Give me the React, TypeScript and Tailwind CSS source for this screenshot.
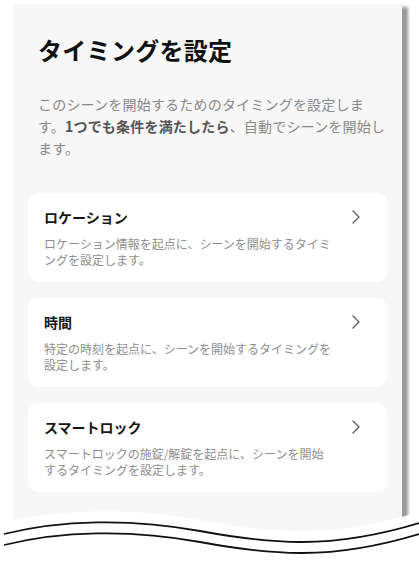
const font = { fontFamily: '"Noto Sans CJK JP", "Noto Sans", sans-serif' };

type Item = { title: string; lines: string[] };

const items: Item[] = [
  {
    title: 'ロケーション',
    lines: ['ロケーション情報を起点に、シーンを開始するタイミ', 'ングを設定します。'],
  },
  {
    title: '時間',
    lines: ['特定の時刻を起点に、シーンを開始するタイミングを', '設定します。'],
  },
  {
    title: 'スマートロック',
    lines: ['スマートロックの施錠/解錠を起点に、シーンを開始', 'するタイミングを設定します。'],
  },
];

function Chevron() {
  return (
    <svg width="10" height="14" viewBox="0 0 10 14" className="mt-[3px] shrink-0">
      <polyline
        points="2,1 8,7 2,13"
        fill="none"
        stroke="#5a5a5a"
        strokeWidth="1.3"
        strokeLinecap="round"
        strokeLinejoin="round"
      />
    </svg>
  );
}

function TimingCard({ item }: { item: Item }) {
  return (
    <div className="rounded-[10px] bg-white pl-4 pr-[26px] pt-[14px] pb-[14px]">
      <div className="flex items-start justify-between">
        <div className="text-[14px] leading-[20px] font-bold text-[#161616]">{item.title}</div>
        <Chevron />
      </div>
      <div className="mt-[9px] text-[12px] leading-[16px] text-[#8e8e8e] whitespace-nowrap">
        {item.lines.map((l, i) => (
          <div key={i}>{l}</div>
        ))}
      </div>
    </div>
  );
}

export default function App() {
  return (
    <div className="relative w-[419px] h-[566px] overflow-hidden bg-white" style={font}>
      <div className="ml-[13px] mt-[4px] w-[389px] h-[556px] bg-[#f7f7f7] shadow-[6px_3px_3px_rgba(0,0,0,0.4)] pt-[30px]">
        <h1 className="pl-[25px] text-[24px] leading-[32px] font-bold text-[#111] tracking-[0.3px]">
          タイミングを設定
        </h1>
        <p className="mt-[27px] pl-[25px] text-[14px] leading-[22px] text-[#888] whitespace-nowrap tracking-[0.2px]">
          このシーンを開始するためのタイミングを設定しま
          <br />
          す。<span className="font-bold text-[#555]">1つでも条件を満たしたら</span>、自動でシーンを開始し
          <br />
          ます。
        </p>
        <div className="mt-[34px] flex flex-col gap-4 px-[15px]">
          {items.map((it) => (
            <TimingCard key={it.title} item={it} />
          ))}
        </div>
      </div>

      <svg
        className="absolute left-0 bottom-0"
        width="419"
        height="76"
        viewBox="0 490 419 76"
      >
        <path
          d="M 0 523 C 60 509, 130 507, 200 520 S 330 539, 419 512 L 419 566 L 0 566 Z"
          fill="#fff"
        />
        <path
          d="M 4 534 C 60 520, 130 518, 200 531 S 330 550, 419 523"
          fill="none"
          stroke="#111"
          strokeWidth="1.8"
        />
        <path
          d="M 4 545 C 60 531, 130 529, 200 542 S 330 561, 419 534"
          fill="none"
          stroke="#111"
          strokeWidth="1.8"
        />
      </svg>
    </div>
  );
}
